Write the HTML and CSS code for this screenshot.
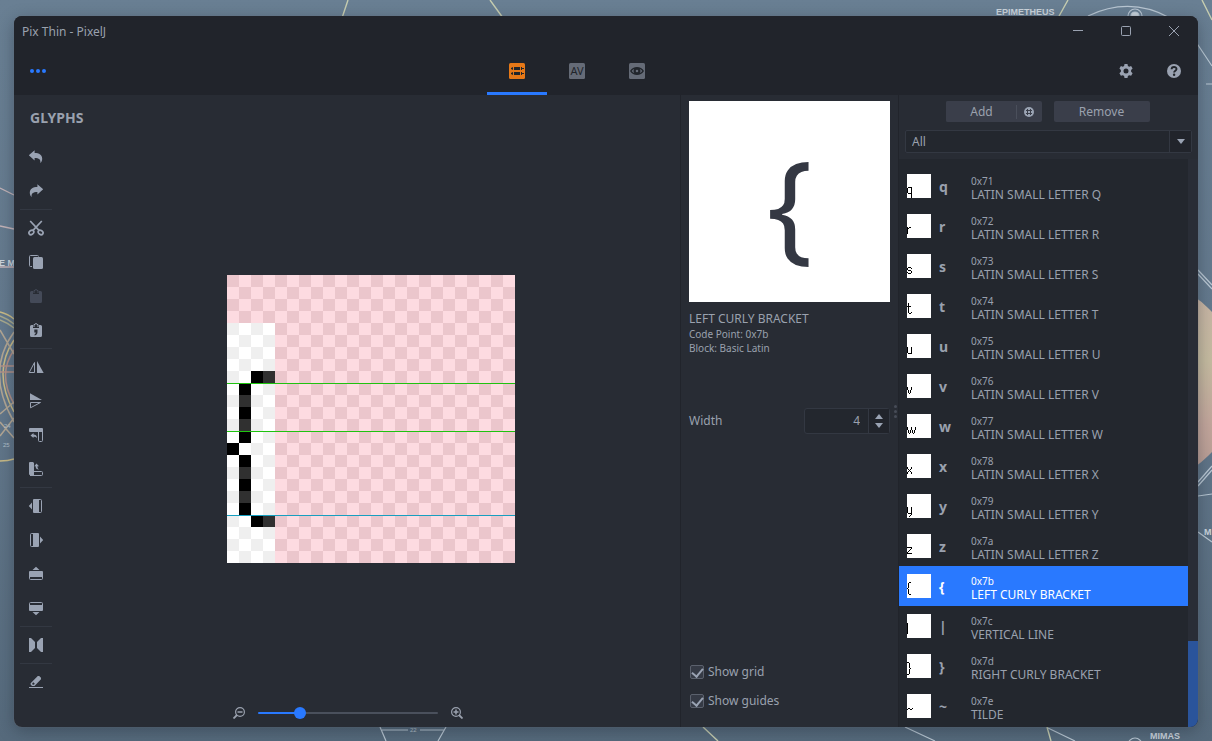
FILE: index.html
```html
<!DOCTYPE html>
<html lang="en">
<head>
<meta charset="utf-8">
<meta name="viewport" content="width=device-width, initial-scale=1">
<title>Pix Thin - PixelJ</title>
<link rel="stylesheet" href="styles.css">
</head>
<body>
<svg class="wallpaper" viewBox="0 0 1212 741" preserveAspectRatio="xMidYMid slice" aria-hidden="true">
  <defs>
    <linearGradient id="sky" x1="0" y1="0" x2="0" y2="1"><stop offset="0" stop-color="#697f93"/><stop offset=".5" stop-color="#63788c"/><stop offset="1" stop-color="#566a7c"/></linearGradient>
    <linearGradient id="planet" x1="0" y1="0" x2="0" y2="1"><stop offset="0" stop-color="#c9b3a6"/><stop offset=".4" stop-color="#c5bba0"/><stop offset=".7" stop-color="#c3a69c"/><stop offset="1" stop-color="#b59a92"/></linearGradient>
  </defs>
  <rect width="1212" height="741" fill="url(#sky)"/>
  <circle cx="1135" cy="382" r="104" fill="url(#planet)"/>
  <g fill="none" stroke="#c6cdb0" stroke-width="1.4">
    <path d="M348 0 342 18M490 0 503 18M1068 0 1058 18M1202 0 1212 20M703 727 718 741M1047 727 1051 741"/>
  </g>
  <g fill="none" stroke="#b9c7d3" stroke-width="1.2">
    <path d="M1088 16Q1130-4 1170 18"/><circle cx="1135" cy="16" r="7"/><circle cx="1135" cy="16" r="4" fill="#c9d3dc"/>
    <path d="M1196 42 1212 66M1206 84h6M1198 496l14-2M1198 532l14 10M1198 270l14 15M1198 274l14 15M1198 486l14-16M1198 482l14-16M905 727l30 14M1048 728l27 13"/>
    <path d="M380 727l6 14M446 727l-8 14M382 730h26M420 730h24"/><circle cx="1135" cy="745" r="7"/>
  </g>
  <g fill="none" stroke="#c3b3b8" stroke-width="1.3"><path d="M0 188l14 7M0 226l14 3M0 267h14"/></g>
  <g fill="none" stroke-width="1.5">
    <path d="M0 312q8 2 14 7M0 461q8 0 14-2" stroke="#c8ba86"/>
    <path d="M0 316q8 3 14 8M0 320q8 3 14 8" stroke="#a9aa8e"/>
    <path d="M14 340q-22 32 0 72" stroke="#c8ba86"/><path d="M14 350q-17 24 0 54M0 366h14M0 372h14" stroke="#b18f86"/>
    <path d="M14 332q-29 40 0 90M0 330l14 24M0 414l14-12M0 422l14 16M0 436l14-18" stroke="#b2a694"/>
  </g>
  <g class="wall-text"><text x="996" y="15">EPIMETHEUS</text><text x="1150" y="739">MIMAS</text><text x="-1" y="266">E M</text><text x="1204" y="535">M</text></g>
  <g class="wall-num"><text x="410" y="732">22</text><text x="3" y="447">25</text><text x="4" y="428">24</text></g>
</svg>

<main class="window">
  <header class="header">
    <div class="titlebar">
      <h1 class="title">Pix Thin - PixelJ</h1>
      <button class="head-btn cap" aria-label="Minimize"><svg viewBox="0 0 10 10" class="ic10"><path class="line" d="M0 4.500h10"/></svg></button>
      <button class="head-btn cap" aria-label="Maximize"><svg viewBox="0 0 10 10" class="ic10"><rect class="line" x=".5" y=".5" width="9" height="9" rx="1"/></svg></button>
      <button class="head-btn cap" aria-label="Close"><svg viewBox="0 0 10 10" class="ic10"><path class="line" d="M0 0l10 10M10 0 0 10"/></svg></button>
    </div>
    <div class="topbar">
      <button class="head-btn menu" aria-label="Menu"><svg viewBox="0 0 16 16" class="ic16"><circle cx="2" cy="8" r="2"/><circle cx="8" cy="8" r="2"/><circle cx="14" cy="8" r="2"/></svg></button>
      <nav class="tabs">
        <button class="tab active" aria-label="Glyphs"><svg viewBox="0 0 16 16" class="ic16"><rect width="16" height="16" rx="1.5" fill="#e67817"/><path fill="#21252b" d="M2 5l2-1v3L2 6zM5 4h6v3H5zM12 4h1v1h2v1h-2v1h-1zM2 10l2-1v3l-2-1zM5 9h6v3H5zM12 9h1v1h2v1h-2v1h-1z"/></svg></button>
        <button class="tab" aria-label="Kerning"><svg viewBox="0 0 16 16" class="ic16"><rect width="16" height="16" rx="1.5" fill="#656b77"/><text x="8" y="12" class="av">AV</text></svg></button>
        <button class="tab" aria-label="Preview"><svg viewBox="0 0 16 16" class="ic16"><rect width="16" height="16" rx="1.5" fill="#656b77"/><path fill="#21252b" fill-rule="evenodd" d="M1 8c3-5.200 11-5.200 14 0-3 5.200-11 5.200-14 0zm1.700 0c.7 1 1.500 1.700 2.500 2.100a3.500 3.500 0 0 1 0-4.200C4.200 6.300 3.400 7 2.700 8zm10.600 0c-.7-1-1.500-1.700-2.500-2.100a3.500 3.500 0 0 1 0 4.200c1-.4 1.800-1.100 2.500-2.100zM8 6.700a1.300 1.300 0 1 0 0 2.600 1.300 1.300 0 0 0 0-2.600z"/></svg></button>
      </nav>
      <button class="head-btn" aria-label="Settings"><svg viewBox="0 0 16 16" class="ic16"><path fill-rule="evenodd" d="M6.500 1h3l.4 2 1.300.7 1.900-.7 1.500 2.600-1.500 1.400v1.800l1.500 1.400-1.500 2.600-1.900-.6-1.300.7-.4 2.100h-3l-.4-2.100-1.300-.7-1.900.6-1.500-2.600 1.500-1.400V7L1.400 5.600 2.900 3l1.900.7L6.100 3zM8 5.500a2.500 2.500 0 1 0 0 5 2.500 2.500 0 0 0 0-5z"/></svg></button>
      <button class="head-btn" aria-label="Help"><svg viewBox="0 0 16 16" class="ic16"><circle cx="8" cy="8" r="7"/><path d="M5.600 6.300c0-3.200 4.900-3 4.900-.3C10.500 7.700 8.100 7.700 8.100 9.600" fill="none" stroke="#21252b" stroke-width="1.900"/><circle cx="8.100" cy="11.800" r="1.200" fill="#21252b"/></svg></button>
    </div>
  </header>

  <div class="panes">
    <section class="editor">
      <h2 class="heading">GLYPHS</h2>
      <div class="work">
        <div class="tools" role="toolbar" aria-label="Glyph tools">
          <button class="tool" aria-label="Undo"><svg viewBox="0 0 16 16" class="ic16"><path d="M.8 6.200 6.600 1.200v2.800c4.600 0 7.600 2 7.600 5.700 0 1.700-.6 3.300-2 4.400 1-3.400-1.200-5.200-5.600-5.200v2.700z"/></svg></button>
          <button class="tool" aria-label="Redo"><svg viewBox="0 0 16 16" class="ic16"><path d="M15.200 6.200 9.400 1.200v2.800c-4.600 0-7.600 2-7.600 5.700 0 1.700.6 3.300 2 4.400-1-3.400 1.200-5.200 5.600-5.200v2.700z"/></svg></button>
          <hr class="sep">
          <button class="tool" aria-label="Cut"><svg viewBox="0 0 16 16" class="ic16"><g fill="none" stroke="currentColor" stroke-width="1.700"><path d="M13.800 1 4.800 10.600M2.200 1l9 9.600"/><ellipse cx="3.400" cy="12.400" rx="2.600" ry="2" transform="rotate(-35 3.400 12.400)"/><ellipse cx="12.600" cy="12.400" rx="2.600" ry="2" transform="rotate(35 12.600 12.400)"/></g></svg></button>
          <button class="tool" aria-label="Copy"><svg viewBox="0 0 16 16" class="ic16"><path d="M4 12.500H2.500a1 1 0 0 1-1-1v-9a1 1 0 0 1 1-1h7a1 1 0 0 1 1 1" fill="none" stroke="currentColor"/><rect x="5" y="3" width="10" height="12" rx="1.500"/></svg></button>
          <button class="tool" aria-label="Paste" disabled><svg viewBox="0 0 16 16" class="ic16"><path d="M3.500 3H5v3h6V3h1.500A1.500 1.500 0 0 1 14 4.500v9a1.500 1.500 0 0 1-1.500 1.500h-9A1.500 1.500 0 0 1 2 13.500v-9A1.500 1.500 0 0 1 3.500 3z"/><path d="M6 5V2.500h1a1 1 0 0 1 2 0h1V5" fill="none" stroke="currentColor"/></svg></button>
          <button class="tool" aria-label="Paste special"><svg viewBox="0 0 16 16" class="ic16"><path d="M3.500 3H5v3h6V3h1.500A1.500 1.500 0 0 1 14 4.500v9a1.500 1.500 0 0 1-1.500 1.500h-9A1.500 1.500 0 0 1 2 13.500v-9A1.500 1.500 0 0 1 3.500 3z"/><path d="M6 5V2.500h1a1 1 0 0 1 2 0h1V5" fill="none" stroke="currentColor"/><path d="M6.300 7.500h3.200v2.500c0 2-.8 3-2.900 3.500v-1.300c.8-.3 1.200-.8 1.200-1.700H6.300z" fill="#282c34"/></svg></button>
          <hr class="sep">
          <button class="tool" aria-label="Flip horizontally"><svg viewBox="0 0 16 16" class="ic16"><path d="M9 2v12h6.700z"/><path d="M6.500 3.500v10H1.200z" fill="none" stroke="currentColor"/></svg></button>
          <button class="tool" aria-label="Flip vertically"><svg viewBox="0 0 16 16" class="ic16"><path d="M2 .3V7h12z"/><path d="M2.500 9.500v5.300l10-5.300z" fill="none" stroke="currentColor"/></svg></button>
          <button class="tool" aria-label="Rotate left"><svg viewBox="0 0 16 16" class="ic16"><path d="M2 1h12a1 1 0 0 1 1 1v3H2a1 1 0 0 1-1-1V2a1 1 0 0 1 1-1z"/><path d="M10.500 5v8.500a1 1 0 0 0 1 1h2a1 1 0 0 0 1-1V4" fill="none" stroke="currentColor"/><path d="M2.500 8.500 5.500 6v1.500c2 0 3.500 1 3.500 3.800-.8-1.400-1.800-1.600-3.500-1.600V11z"/></svg></button>
          <button class="tool" aria-label="Rotate right"><svg viewBox="0 0 16 16" class="ic16"><path d="M2 1h3l1 1v12H2a1 1 0 0 1-1-1V2a1 1 0 0 1 1-1z"/><path d="M2 14.500h11.500a1 1 0 0 0 1-1v-2a1 1 0 0 0-1-1H6" fill="none" stroke="currentColor"/><path d="M8.500 2.500 11 5.300H9.500c0 1.700.3 2.600 1.700 3.300C8.500 8.600 7.600 7.300 7.600 5.300H6.200z"/></svg></button>
          <hr class="sep">
          <button class="tool" aria-label="Move left"><svg viewBox="0 0 16 16" class="ic16"><path d="M4 4.500v7L.8 8zM6 1h5v14H6a1 1 0 0 1-1-1V2a1 1 0 0 1 1-1z"/><path d="M11 1.500h1.500a1 1 0 0 1 1 1v11a1 1 0 0 1-1 1H11" fill="none" stroke="currentColor"/></svg></button>
          <button class="tool" aria-label="Move right"><svg viewBox="0 0 16 16" class="ic16"><path d="M12 4.500v7L15.200 8zM5 1h5a1 1 0 0 1 1 1v12a1 1 0 0 1-1 1H5z"/><path d="M5 1.500H3.500a1 1 0 0 0-1 1v11a1 1 0 0 0 1 1H5" fill="none" stroke="currentColor"/></svg></button>
          <button class="tool" aria-label="Move up"><svg viewBox="0 0 16 16" class="ic16"><path d="M4.500 4h7L8 .8zM1 6a1 1 0 0 1 1-1h12a1 1 0 0 1 1 1v5H1z"/><path d="M1.500 11v1.500a1 1 0 0 0 1 1h11a1 1 0 0 0 1-1V11" fill="none" stroke="currentColor"/></svg></button>
          <button class="tool" aria-label="Move down"><svg viewBox="0 0 16 16" class="ic16"><path d="M4.500 12h7L8 15.200zM1 5h14v5a1 1 0 0 1-1 1H2a1 1 0 0 1-1-1z"/><path d="M1.500 5V3.500a1 1 0 0 1 1-1h11a1 1 0 0 1 1 1V5" fill="none" stroke="currentColor"/></svg></button>
          <hr class="sep">
          <button class="tool" aria-label="Symmetry"><svg viewBox="0 0 16 16" class="ic16"><path d="M1 1h2l4 4v6l-4 4H1zM15 1h-2L9 5v6l4 4h2z"/></svg></button>
          <hr class="sep">
          <button class="tool" aria-label="Erase"><svg viewBox="0 0 16 16" class="ic16"><path fill-rule="evenodd" d="M9.800 2h1.400L13 3.800v1.400L6.500 12H4L2.600 10.600V9.200zM4.300 9.200v1.200l1.500.3 1-1-1.500-1.500zM1 13h14v1H1z"/></svg></button>
        </div>
        <div class="stage">
          <svg class="canvas" viewBox="0 0 288 288" role="img" aria-label="Glyph canvas">
            <defs>
              <pattern id="pink" width="24" height="24" patternUnits="userSpaceOnUse"><path fill="#fddbe1" d="M0 0h24v24H0z"/><path fill="#ebc6cc" d="M0 0h12v12H0zM12 12h12v12H12z"/></pattern>
              <pattern id="grey" width="24" height="24" patternUnits="userSpaceOnUse"><path fill="#fff" d="M0 0h24v24H0z"/><path fill="#efefef" d="M0 0h12v12H0zM12 12h12v12H12z"/></pattern>
            </defs>
            <rect width="288" height="288" fill="url(#pink)"/>
            <rect y="48" width="48" height="240" fill="url(#grey)"/>
            <path fill="#000" d="M24 96h12v12H24zM12 108h12v12H12zM12 132h12v12H12zM12 156h12v12H12zM0 168h12v12H0zM12 180h12v12H12zM12 204h12v12H12zM12 228h12v12H12zM24 240h12v12H24z"/>
            <path fill="#303030" d="M36 96h12v12H36zM12 120h12v12H12zM12 144h12v12H12zM12 192h12v12H12zM12 216h12v12H12zM36 240h12v12H36z"/>
            <path fill="#1fc30f" d="M0 108h288v1H0zM0 156h288v1H0z"/><path fill="#169fc0" d="M0 240h288v1H0z"/>
          </svg>
        </div>
      </div>
      <div class="zoom">
        <button class="zoom-btn" aria-label="Zoom out"><svg viewBox="0 0 12 12" class="ic12"><g fill="none" stroke="currentColor"><circle cx="7" cy="5" r="4.400" stroke-width="1.200"/><path d="M4 8 .5 11.500" stroke-width="1.800"/><path d="M4.500 5h5" stroke-width="1.500"/></g></svg></button>
        <input class="slider" type="range" min="0" max="14" value="3" aria-label="Zoom">
        <button class="zoom-btn" aria-label="Zoom in"><svg viewBox="0 0 12 12" class="ic12"><g fill="none" stroke="currentColor"><circle cx="5" cy="5" r="4.400" stroke-width="1.200"/><path d="M8 8l3.500 3.500" stroke-width="1.800"/><path d="M2.500 5h5M5 2.500v5" stroke-width="1.500"/></g></svg></button>
      </div>
    </section>

    <section class="details">
      <div class="preview">{</div>
      <h3 class="glyph-name">LEFT CURLY BRACKET</h3>
      <p class="meta">Code Point: 0x7b</p>
      <p class="meta">Block: Basic Latin</p>
      <div class="field">
        <label for="width">Width</label>
        <div class="spinner">
          <input id="width" type="number" value="4">
          <div class="steps">
            <button class="step" aria-label="Increase"><svg viewBox="0 0 10 5" class="arrow"><path d="M1 5 5 0l4 5z"/></svg></button>
            <button class="step" aria-label="Decrease"><svg viewBox="0 0 10 5" class="arrow"><path d="M1 0l4 5 4-5z"/></svg></button>
          </div>
        </div>
      </div>
      <div class="checks">
        <label class="check"><input type="checkbox" checked>Show grid</label>
        <label class="check"><input type="checkbox" checked>Show guides</label>
      </div>
      <span class="grip"><i></i><i></i><i></i></span>
    </section>

    <section class="browser">
      <div class="actions">
        <div class="split">
          <button class="btn add">Add</button>
          <button class="btn more" aria-label="Add from block"><svg viewBox="0 0 10 10" class="ic10"><circle cx="5" cy="5" r="5"/><path d="M3.500 2v6M6.500 2v6M2 3.500h6M2 6.500h6" stroke="#3a3e4a" fill="none"/></svg></button>
        </div>
        <button class="btn">Remove</button>
      </div>
      <div class="filter">
        <select aria-label="Filter"><option>All</option></select>
        <span class="filter-arrow"><svg viewBox="0 0 10 5" class="arrow"><path d="M1 0l4 5 4-5z"/></svg></span>
      </div>
      <div class="listwrap">
        <ul class="list">
          <li class="item"><svg class="thumb" viewBox="0 0 24 24"><path d="M1 13.500h4M.5 14v5M1 19.500h4M4.500 14v10"/></svg><b class="char">q</b><div class="info"><span class="code">0x71</span><span class="name">LATIN SMALL LETTER Q</span></div></li>
          <li class="item"><svg class="thumb" viewBox="0 0 24 24"><path d="M.5 13v7M1 14.500h1M2 13.500h2"/></svg><b class="char">r</b><div class="info"><span class="code">0x72</span><span class="name">LATIN SMALL LETTER R</span></div></li>
          <li class="item"><svg class="thumb" viewBox="0 0 24 24"><path d="M1 13.500h3M4 14.500h1M.5 14v2M1 16.500h3M4.500 17v2M0 18.500h1M1 19.500h3"/></svg><b class="char">s</b><div class="info"><span class="code">0x73</span><span class="name">LATIN SMALL LETTER S</span></div></li>
          <li class="item"><svg class="thumb" viewBox="0 0 24 24"><path d="M1.500 9v10M0 12.500h4M2 19.500h2M4.500 18v1"/></svg><b class="char">t</b><div class="info"><span class="code">0x74</span><span class="name">LATIN SMALL LETTER T</span></div></li>
          <li class="item"><svg class="thumb" viewBox="0 0 24 24"><path d="M.5 13v6M1 19.500h4M4.500 13v7"/></svg><b class="char">u</b><div class="info"><span class="code">0x75</span><span class="name">LATIN SMALL LETTER U</span></div></li>
          <li class="item"><svg class="thumb" viewBox="0 0 24 24"><path d="M.5 13v3M4.500 13v3M1.500 16v3M3.500 16v3M2.500 19v1"/></svg><b class="char">v</b><div class="info"><span class="code">0x76</span><span class="name">LATIN SMALL LETTER V</span></div></li>
          <li class="item"><svg class="thumb" viewBox="0 0 24 24"><path d="M.5 13v3M4.500 13v3M8.500 13v3M1.500 16v3M3.500 16v3M5.500 16v3M7.500 16v3M2.500 19v1M6.500 19v1"/></svg><b class="char">w</b><div class="info"><span class="code">0x77</span><span class="name">LATIN SMALL LETTER W</span></div></li>
          <li class="item"><svg class="thumb" viewBox="0 0 24 24"><path d="M.5 13v2M4.500 13v2M1.500 15v1M3.500 15v1M2.500 16v1M1.500 17v1M3.500 17v1M.5 18v2M4.500 18v2"/></svg><b class="char">x</b><div class="info"><span class="code">0x78</span><span class="name">LATIN SMALL LETTER X</span></div></li>
          <li class="item"><svg class="thumb" viewBox="0 0 24 24"><path d="M.5 13v6M1 19.500h4M4.500 13v8M3.500 21v1M2.500 22v1"/></svg><b class="char">y</b><div class="info"><span class="code">0x79</span><span class="name">LATIN SMALL LETTER Y</span></div></li>
          <li class="item"><svg class="thumb" viewBox="0 0 24 24"><path d="M0 13.500h5M4.500 14v1M3.500 15v1M2.500 16v1M1.500 17v1M.5 18v1M0 19.500h5"/></svg><b class="char">z</b><div class="info"><span class="code">0x7a</span><span class="name">LATIN SMALL LETTER Z</span></div></li>
          <li class="item selected"><svg class="thumb" viewBox="0 0 24 24"><path d="M2 8.500h2M1.500 9v5M0 14.500h1M1.500 15v5M2 20.500h2"/></svg><b class="char">{</b><div class="info"><span class="code">0x7b</span><span class="name">LEFT CURLY BRACKET</span></div></li>
          <li class="item"><svg class="thumb" viewBox="0 0 24 24"><path d="M.5 9v11"/></svg><b class="char">|</b><div class="info"><span class="code">0x7c</span><span class="name">VERTICAL LINE</span></div></li>
          <li class="item"><svg class="thumb" viewBox="0 0 24 24"><path d="M0 8.500h2M2.500 9v5M3 14.500h1M2.500 15v5M0 20.500h2"/></svg><b class="char">}</b><div class="info"><span class="code">0x7d</span><span class="name">RIGHT CURLY BRACKET</span></div></li>
          <li class="item"><svg class="thumb" viewBox="0 0 24 24"><path d="M1 14.500h2M0 15.500h1M3 15.500h2M5 14.500h1"/></svg><b class="char">~</b><div class="info"><span class="code">0x7e</span><span class="name">TILDE</span></div></li>
        </ul>
        <div class="scroll"><div class="scroll-thumb"></div></div>
      </div>
    </section>
  </div>
</main>
</body>
</html>
```
FILE: styles.css
```css
* { box-sizing: border-box; }

body {
  margin: 0;
  min-height: 100vh;
  padding: 16px 14px 14px;
  display: flex;
  background: #63788c;
  color: #9aa1ae;
  font: 12px/16px "Noto Sans", "Open Sans", sans-serif;
}

h1, h2, h3, p, ul { margin: 0; padding: 0; }

button, input, select {
  margin: 0;
  padding: 0;
  border: 0;
  background: none;
  color: inherit;
  font: inherit;
}

svg { display: block; fill: currentColor; }

.wallpaper {
  position: absolute;
  inset: 0;
  width: 100%;
  height: 100%;
}

.wall-text { font: bold 9px "Liberation Sans Narrow", "Liberation Sans", sans-serif; fill: #cbd4dc; }
.wall-num { font: 6px "Liberation Sans", sans-serif; fill: #b3c0ca; }

.ic16 { width: 16px; height: 16px; }
.ic12 { width: 12px; height: 12px; }
.ic10 { width: 10px; height: 10px; }
.arrow { width: 10px; height: 5px; }
.line { fill: none; stroke: currentColor; }

.window {
  position: relative;
  flex: 1;
  display: flex;
  flex-direction: column;
  overflow: hidden;
  border-radius: 8px;
  background: #282c34;
  box-shadow: 0 0 1px #777d85, 0 4px 16px rgba(20, 30, 40, .35);
}

/* Header */
.header { background: #21242b; }
.titlebar { display: flex; height: 30px; }
.title { flex: 1; padding-left: 8px; font-size: 12px; line-height: 31px; font-weight: 400; }
.topbar { display: flex; height: 49px; }

.head-btn {
  width: 48px;
  display: flex;
  align-items: center;
  justify-content: center;
  color: #9aa2b1;
}

.menu { color: #2979ff; }

.tabs { flex: 1; display: flex; justify-content: center; margin-right: 10px; }

.tab {
  width: 60px;
  display: flex;
  align-items: center;
  justify-content: center;
  border-top: 3px solid transparent;
  border-bottom: 3px solid transparent;
}

.tab.active { border-bottom-color: #2979ff; }
.av { font: 11px "Noto Sans", sans-serif; fill: #21252b; text-anchor: middle; }

/* Panes */
.panes { flex: 1; display: flex; }

.editor { flex: 1; display: flex; flex-direction: column; }
.heading { padding-left: 16px; font-size: 14px; line-height: 45px; }
.work { flex: 1; display: flex; }

.tools { width: 44px; margin-right: 4px; }

.tool {
  width: 100%;
  height: 34px;
  display: flex;
  align-items: center;
  justify-content: center;
  color: #9aa3b3;
}

.tool:disabled { color: #444a58; }

.sep {
  height: 1px;
  margin: 1px 6px;
  border: 0;
  background: #333842;
}

.stage {
  flex: 1;
  display: flex;
  align-items: center;
  justify-content: center;
  padding-bottom: 1px;
}

.canvas { width: 288px; height: 288px; shape-rendering: crispEdges; }

.zoom {
  height: 28px;
  display: flex;
  align-items: center;
  justify-content: center;
  gap: 13px;
  padding-left: 2px;
}

.slider {
  width: 180px;
  height: 12px;
  appearance: none;
}

.slider::-webkit-slider-runnable-track {
  height: 2px;
  border-radius: 1px;
  background: linear-gradient(90deg, #2979ff 23%, #4a505c 23%);
}

.slider::-webkit-slider-thumb {
  appearance: none;
  width: 12px;
  height: 12px;
  margin-top: -5px;
  border-radius: 50%;
  background: #2979ff;
}

/* Details */
.details {
  position: relative;
  width: 218px;
  display: flex;
  flex-direction: column;
  padding: 6px 8px 18px;
  border-left: 1px solid #21242b;
}

.preview {
  aspect-ratio: 1;
  display: flex;
  align-items: center;
  justify-content: center;
  margin-bottom: 9px;
  background: #fff;
  color: #343843;
  font-size: 120px;
  line-height: 200px;
}

.glyph-name { font-size: 12px; line-height: 16px; font-weight: 400; }
.meta { font-size: 10px; line-height: 14px; }

.field {
  display: flex;
  align-items: center;
  justify-content: space-between;
  margin-top: 53px;
}

.spinner {
  width: 86px;
  height: 26px;
  display: flex;
  border: 1px solid #333842;
  border-radius: 3px;
  background: #23272e;
}

.spinner input {
  flex: 1;
  min-width: 0;
  padding-right: 8px;
  text-align: right;
  appearance: textfield;
}

.spinner input::-webkit-inner-spin-button { appearance: none; }

.steps {
  width: 21px;
  display: flex;
  flex-direction: column;
  align-items: center;
  justify-content: center;
  gap: 4px;
  border-left: 1px solid #333842;
  background: #21242b;
  color: #9aa3b3;
}

.step { display: block; }

.checks { margin-top: auto; display: flex; flex-direction: column; gap: 13px; padding-left: 1px; }
.check { display: flex; align-items: center; gap: 4px; }

.check input {
  width: 14px;
  height: 14px;
  display: grid;
  place-items: center;
  appearance: none;
  border: 1px solid #5b616d;
  border-radius: 2px;
  background: #353a45;
}

.check input::after {
  content: "";
  width: 5px;
  height: 9px;
  margin-bottom: 2px;
  border: solid #9aa3b3;
  border-width: 0 2px 2px 0;
  transform: rotate(40deg);
}

.grip {
  position: absolute;
  right: 1px;
  top: 310px;
  display: grid;
  gap: 2px;
}

.grip i { width: 3px; height: 3px; border-radius: 50%; background: #474c57; }

/* Glyph browser */
.browser {
  width: 300px;
  display: flex;
  flex-direction: column;
  border-left: 1px solid #21242b;
}

.actions { display: flex; justify-content: center; gap: 12px; padding: 6px 2px 8px 0; }

.btn {
  width: 96px;
  height: 21px;
  border-radius: 2px;
  background: #3a3e4a;
}

.split { width: 96px; display: flex; border-radius: 2px; background: #3a3e4a; }
.split .add { flex: 1; padding-left: 2px; }

.split .more {
  width: 26px;
  display: flex;
  align-items: center;
  justify-content: center;
  background: linear-gradient(#4a4f5b, #4a4f5b) left center / 1px 14px no-repeat;
  color: #9aa3b3;
}

.filter {
  display: flex;
  margin: 0 6px 6px;
  position: relative;
}

.filter select {
  flex: 1;
  height: 23px;
  padding-left: 6px;
  appearance: none;
  border: 1px solid #333842;
  border-radius: 2px;
  background: #23272e;
}

.filter-arrow {
  position: absolute;
  inset: 1px 1px 1px auto;
  width: 22px;
  display: flex;
  align-items: center;
  justify-content: center;
  border-left: 1px solid #333842;
  background: #21242b;
  color: #9aa3b3;
  pointer-events: none;
}

.listwrap { flex: 1; display: flex; }
.list { flex: 1; padding: 7px 0 1px; list-style: none; background: #23272e; }

.item { display: flex; height: 40px; padding: 8px 8px 0; }
.selected { background: #2979ff; color: #fff; }

.thumb {
  width: 24px;
  height: 24px;
  background: #fff;
  fill: none;
  stroke: #000;
  shape-rendering: crispEdges;
}

.char { width: 32px; margin-left: 8px; font-size: 14px; line-height: 25px; }
.info { display: flex; flex-direction: column; }
.code { font-size: 10px; line-height: 14px; }
.name { line-height: 13px; }

.scroll { width: 10px; display: flex; flex-direction: column; justify-content: flex-end; background: #292d36; }
.scroll-thumb { height: 86px; background: #2a549b; }
```
